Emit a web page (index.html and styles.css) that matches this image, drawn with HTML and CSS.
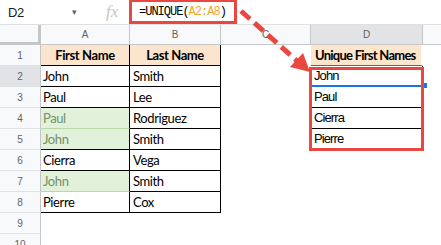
FILE: index.html
```html
<!DOCTYPE html>
<html lang="en">
<head>
  <meta charset="UTF-8">
  <title>UNIQUE formula</title>
  <link rel="stylesheet" href="styles.css">
</head>
<body>

  <!-- Formula bar -->
  <div class="formula-bar">
    <div class="name-box">D2</div>
    <div class="name-drop">&#9662;</div>
    <div class="fx">fx</div>
    <div class="formula"><span>=UNIQUE(</span><span class="ref">A2:A8</span><span>)</span></div>
  </div>

  <!-- Sheet grid -->
  <div class="sheet">
    <div class="corner"></div>
    <div class="col-head">A</div>
    <div class="col-head">B</div>
    <div class="col-head">C</div>
    <div class="col-head selected">D</div>
    <div class="col-head last"></div>

    <!-- result range D2:D5, spilled by the formula -->
    <div class="result">
      <div class="uniq active">John</div>
      <div class="uniq">Paul</div>
      <div class="uniq">Cierra</div>
      <div class="uniq">Pierre</div>
    </div>

    <div class="row-head">1</div>
    <div class="cell tbl head col-a">First Name</div>
    <div class="cell tbl head">Last Name</div>
    <div class="cell"></div>
    <div class="cell uhead">Unique First Names</div>
    <div class="cell"></div>

    <div class="row-head selected">2</div>
    <div class="cell tbl col-a">John</div>
    <div class="cell tbl">Smith</div>
    <div class="cell"></div>
    <div class="cell"></div>

    <div class="row-head">3</div>
    <div class="cell tbl col-a">Paul</div>
    <div class="cell tbl">Lee</div>
    <div class="cell"></div>
    <div class="cell"></div>

    <div class="row-head">4</div>
    <div class="cell tbl col-a dup dup-next">Paul</div>
    <div class="cell tbl">Rodriguez</div>
    <div class="cell"></div>
    <div class="cell"></div>

    <div class="row-head">5</div>
    <div class="cell tbl col-a dup">John</div>
    <div class="cell tbl">Smith</div>
    <div class="cell"></div>
    <div class="cell"></div>

    <div class="row-head">6</div>
    <div class="cell tbl col-a">Cierra</div>
    <div class="cell tbl">Vega</div>
    <div class="cell"></div>
    <div class="cell"></div>
    <div class="cell"></div>

    <div class="row-head">7</div>
    <div class="cell tbl col-a dup dup-next">John</div>
    <div class="cell tbl">Smith</div>
    <div class="cell"></div>
    <div class="cell"></div>
    <div class="cell"></div>

    <div class="row-head">8</div>
    <div class="cell tbl col-a">Pierre</div>
    <div class="cell tbl">Cox</div>
    <div class="cell"></div>
    <div class="cell"></div>
    <div class="cell"></div>

    <div class="row-head">9</div>
    <div class="cell"></div>
    <div class="cell"></div>
    <div class="cell"></div>
    <div class="cell"></div>
    <div class="cell"></div>

    <div class="row-head">10</div>
    <div class="cell"></div>
    <div class="cell"></div>
    <div class="cell"></div>
    <div class="cell"></div>
    <div class="cell"></div>
  </div>

  <!-- dashed arrow from formula to result -->
  <svg class="arrow" width="441" height="245" viewBox="0 0 441 245">
    <line x1="241" y1="11" x2="297" y2="61" stroke="#e8483f" stroke-width="5" stroke-dasharray="12 6"/>
    <polygon points="310,72 290,67 303,53" fill="#e8483f"/>
  </svg>

</body>
</html>
```

FILE: styles.css
```css
body {
  margin: 0;
  background: #fff;
  font-family: "Liberation Sans", Arial, sans-serif;
  color: #000;
  position: relative;
  width: 441px;
  height: 245px;
  overflow: hidden;
}

/* formula bar */
.formula-bar {
  display: flex;
  align-items: center;
  height: 24px;
  border-bottom: 1px solid #e0e0e0;
}

.name-box {
  width: 64px;
  padding-left: 8px;
  font-size: 13px;
  letter-spacing: -0.3px;
  color: #202124;
}

.name-drop {
  width: 24px;
  font-size: 9px;
  color: #5f6368;
}

.fx {
  width: 34px;
  padding-left: 10px;
  box-sizing: border-box;
  font-family: "Liberation Serif", serif;
  font-style: italic;
  font-size: 17px;
  color: #c6c6c6;
}

.formula {
  align-self: stretch;
  margin-top: -1px;
  margin-left: -1px;
  width: 108px;
  box-sizing: border-box;
  border: 3px solid #e8483f;
  padding-left: 7px;
  font-family: "Liberation Mono", monospace;
  font-size: 12px;
  letter-spacing: -1px;
  line-height: 20px;
  color: #000;
}

.formula .ref {
  color: #f4a52c;
}

/* sheet */
.sheet {
  display: grid;
  grid-template-columns: 41px 89px 91px 90px 112px 1fr;
  grid-template-rows: 20px repeat(10, 21px);
}

.corner {
  background: #f8f9fa;
  border-right: 3px solid #c4c7c5;
  border-bottom: 3px solid #c4c7c5;
}

.col-head {
  background: #f8f9fa;
  border-right: 1px solid #c4c7c5;
  border-bottom: 1px solid #c4c7c5;
  font-size: 10px;
  color: #5f6368;
  text-align: center;
  line-height: 20px;
}

.col-head.selected {
  background: #e1e3e6;
}

.col-head.last {
  border-right: none;
}

.row-head {
  background: #f8f9fa;
  border-right: 1px solid #c4c7c5;
  border-bottom: 1px solid #e2e3e3;
  font-size: 10px;
  color: #5f6368;
  text-align: center;
  line-height: 21px;
}

.row-head.selected {
  background: #e1e3e6;
}

.cell {
  box-sizing: border-box;
  white-space: nowrap;
  overflow: hidden;
}

.tbl {
  border-right: 1px solid #000;
  border-bottom: 1px solid #000;
  font-family: Lato, "Liberation Sans", sans-serif;
  font-size: 13px;
  letter-spacing: -0.4px;
  line-height: 20px;
  padding-left: 3px;
}

.tbl.col-a {
  padding-left: 2px;
}

.tbl.head {
  background: #fce5cd;
  font-weight: bold;
  text-align: center;
  padding-left: 0;
}

.tbl.dup {
  background: #e2f1d9;
  color: #768f6c;
}

.tbl.dup-next {
  border-bottom-color: #b9d7a9;
}

.uhead {
  background: #fce5cd;
  border-right: 2px solid #fff;
  border-bottom: 1px solid #1a73e8;
  font-family: Lato, "Liberation Sans", sans-serif;
  font-weight: bold;
  font-size: 13px;
  letter-spacing: -0.75px;
  line-height: 20px;
  padding-left: 4px;
}

/* D2:D5 */
.result {
  grid-column: 5;
  grid-row: 3 / 7;
  position: relative;
  display: flex;
  flex-direction: column;
}

.result::after {
  content: "";
  position: absolute;
  top: 1px;
  bottom: -1px;
  left: -2px;
  right: -1px;
  border: 3px solid #e8483f;
  pointer-events: none;
}

.uniq {
  position: relative;
  height: 21px;
  box-sizing: border-box;
  border-right: 1px solid #000;
  border-bottom: 1px solid #000;
  font-size: 13px;
  letter-spacing: -0.9px;
  line-height: 20px;
  padding-left: 3px;
  white-space: nowrap;
}

.uniq.active {
  border-bottom: 2px solid #1a73e8;
  line-height: 19px;
}

.uniq.active::after {
  content: "";
  position: absolute;
  right: -5px;
  bottom: -3px;
  width: 4px;
  height: 5px;
  background: #1a73e8;
}

.arrow {
  position: absolute;
  left: 0;
  top: 0;
  pointer-events: none;
}
```
